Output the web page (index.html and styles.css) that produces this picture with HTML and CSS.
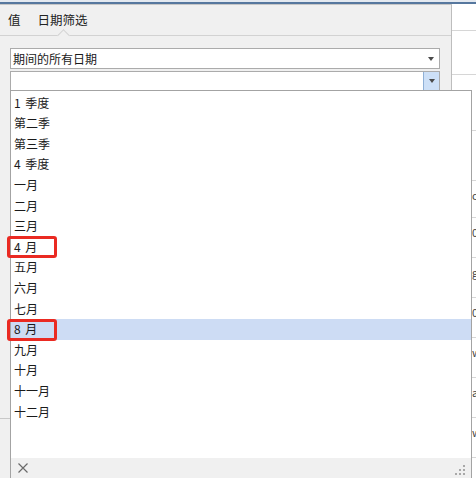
FILE: index.html
```html
<!DOCTYPE html>
<html lang="zh-CN">
<head>
  <meta charset="UTF-8" />
  <title>日期筛选</title>
  <link rel="stylesheet" href="styles.css">
</head>
<body>
  <div class="sheet-top"></div>
  <div class="screen">
    <div class="panel">
      <div class="tabs">
        <span class="tab">值</span>
        <span class="tab active">日期筛选</span>
      </div>
      <div class="panel-body">
        <div class="combo"><span class="combo-text">期间的所有日期</span><i class="arrow"></i></div>
        <div class="combo open"><span class="combo-text"></span><b class="combo-btn"><i class="arrow"></i></b></div>
        <div class="side-rule"></div>
      </div>

      <!-- popup list of the second combo -->
      <div class="dropdown">
        <ul class="options">
          <li>1 季度</li>
          <li>第二季</li>
          <li>第三季</li>
          <li>4 季度</li>
          <li>一月</li>
          <li>二月</li>
          <li>三月</li>
          <li class="marked">4 月<span class="mark"></span></li>
          <li>五月</li>
          <li>六月</li>
          <li>七月</li>
          <li class="marked hover">8 月<span class="mark"></span></li>
          <li>九月</li>
          <li>十月</li>
          <li>十一月</li>
          <li>十二月</li>
        </ul>
        <div class="drop-foot">
          <svg class="close" width="10" height="10" viewBox="0 0 10 10"><path d="M0.5 0.5 L9.5 9.5 M9.5 0.5 L0.5 9.5" stroke="#6a6a6a" stroke-width="1.2" fill="none"/></svg>
          <svg class="grip" width="12" height="12" viewBox="0 0 12 12" fill="#a8a8a8">
            <rect x="9" y="1" width="2" height="2"/>
            <rect x="5" y="5" width="2" height="2"/><rect x="9" y="5" width="2" height="2"/>
            <rect x="1" y="9" width="2" height="2"/><rect x="5" y="9" width="2" height="2"/><rect x="9" y="9" width="2" height="2"/>
          </svg>
        </div>
      </div>
    </div>

    <div class="cells">
      <div class="cell" style="height:27px"></div>
      <div class="cell" style="height:44px"></div>
      <div class="cell" style="height:56px"></div>
      <div class="cell" style="height:50px"></div>
      <div class="cell" style="height:37px">d</div>
      <div class="cell" style="height:40px">0</div>
      <div class="cell" style="height:40px">g</div>
      <div class="cell" style="height:40px">0</div>
      <div class="cell" style="height:40px">w</div>
      <div class="cell" style="height:40px">a</div>
      <div class="cell" style="height:40px">w</div>
    </div>
  </div>
</body>
</html>
```

FILE: styles.css
```css
* { margin: 0; padding: 0; box-sizing: border-box; }
html, body {
  width: 476px;
  height: 478px;
  overflow: hidden;
  background: #fff;
  font-family: "Noto Sans CJK SC", "Noto Sans", sans-serif;
  font-size: 12px;
  color: #1a1a1a;
}
.sheet-top {
  height: 4px;
  background: #e4e9f0;
  border-bottom: 2px solid #56779e;
}
.screen {
  display: flex;
  height: 474px;
}
.panel {
  position: relative;
  width: 452px;
  flex: none;
  background: #f0f0f0;
  border-top: 1px solid #c6c6c6;
  border-right: 1px solid #bdbdbd;
}
.tabs {
  display: flex;
  height: 31px;
  padding-left: 8px;
  align-items: center;
  gap: 17px;
  border-bottom: 1px solid #d2d2d2;
  font-size: 12.5px;
  color: #222;
}
.tab {
  position: relative;
  line-height: 20px;
}
.tab.active::after {
  content: "";
  position: absolute;
  left: 50%;
  bottom: -10px;
  width: 8px;
  height: 8px;
  margin-left: -4px;
  background: #f0f0f0;
  border-left: 1px solid #d2d2d2;
  border-top: 1px solid #d2d2d2;
  transform: rotate(45deg);
}
.panel-body {
  position: relative;
  padding: 12px 0 0 10px;
}
.combo {
  display: flex;
  align-items: center;
  width: 430px;
  height: 21px;
  background: #fff;
  border: 1px solid #ababab;
  padding-left: 2px;
  margin-bottom: 2px;
}
.combo-text {
  flex: 1;
  line-height: 19px;
}
.combo > .arrow { margin-right: 5px; }
.combo.open {
  height: 20px;
}
.arrow {
  display: block;
  width: 0;
  height: 0;
  border-left: 3.5px solid transparent;
  border-right: 3.5px solid transparent;
  border-top: 4px solid #4a4a4a;
}
.combo-btn {
  display: flex;
  align-items: center;
  justify-content: center;
  align-self: stretch;
  width: 16px;
  background: #cde0f7;
  border-left: 1px solid #8fb0d6;
}
.side-rule {
  position: absolute;
  left: 0;
  top: 382px;
  width: 10px;
  border-top: 1px solid #c8c8c8;
}
.dropdown {
  position: absolute;
  left: 10px;
  top: 85px;
  width: 462px;
  bottom: 0;
  display: flex;
  flex-direction: column;
  background: #fff;
  border: 1px solid #a3a3a3;
  border-bottom: none;
  z-index: 2;
}
.options {
  flex: 1;
  list-style: none;
  padding-top: 1.7px;
}
.options li {
  position: relative;
  height: 20.6px;
  line-height: 20.6px;
  padding-left: 3px;
  word-spacing: 2px;
}
.options li.hover {
  background: #cddcf4;
}
.mark {
  position: absolute;
  left: -4px;
  top: -0.5px;
  width: 50px;
  height: 22px;
  border: 3px solid #ea2a22;
  border-radius: 3px;
}
.drop-foot {
  display: flex;
  align-items: center;
  justify-content: space-between;
  height: 20px;
  background: #f0f0f0;
  padding: 0 5px 0 7px;
}
.grip { margin-top: 3px; }
.cells {
  flex: 1;
  background: #fff;
}
.cell {
  border-bottom: 1px solid #d6d6d6;
  padding: 6px 0 0 20px;
  font-size: 11px;
  color: #444;
  overflow: hidden;
}
```
